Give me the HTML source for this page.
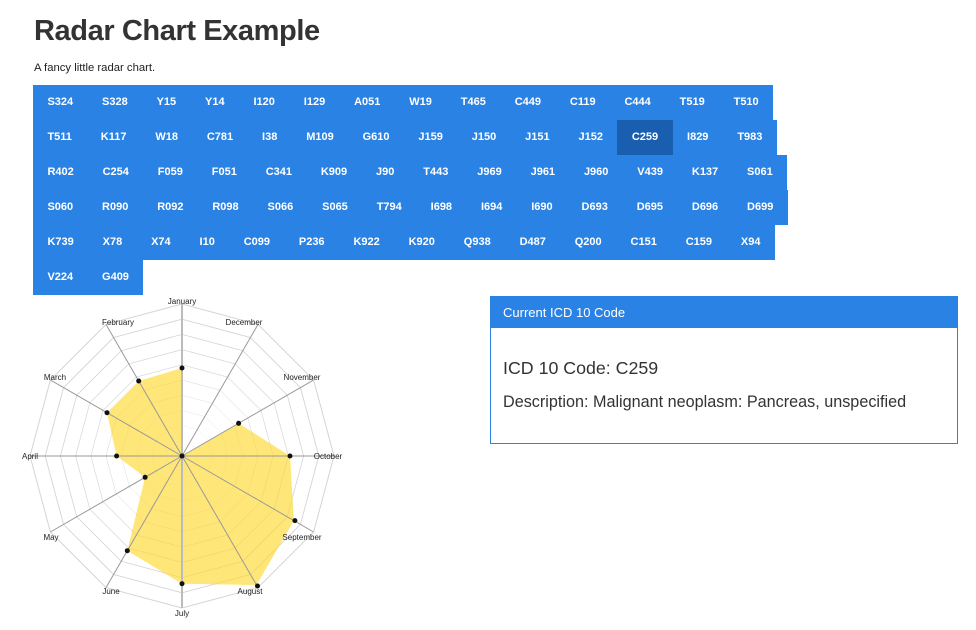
<!DOCTYPE html>
<html><head><meta charset="utf-8"><style>
body{margin:0;background:#fff;font-family:"Liberation Sans",sans-serif;color:#333;width:976px;height:630px;overflow:hidden;position:relative}
h1{position:absolute;left:34px;top:15px;margin:0;font-size:29px;font-weight:bold;color:#333;letter-spacing:-0.4px}
.sub{position:absolute;left:34px;top:62px;font-size:11.3px;color:#222}
.btns{position:absolute;left:33px;top:85px}
.row{display:flex;height:35px}
.row span{background:#2a82e4;color:#fff;font-weight:bold;font-size:11px;line-height:35px;padding:0 14.45px;white-space:nowrap}
.row span.sel{background:#1a5eb0}
.panel{position:absolute;left:490px;top:296px;width:468px;height:148px;border:1px solid #2a82e4;box-sizing:border-box}
.ph{background:#2a82e4;color:#fff;font-size:13px;height:31px;line-height:31px;padding-left:12px}
.code{position:absolute;left:12px;top:61px;font-size:17.8px;color:#333}
.desc{position:absolute;left:12px;top:96px;font-size:16.2px;color:#333}
svg{position:absolute;left:0;top:0}
</style></head><body>
<h1>Radar Chart Example</h1>
<div class="sub">A fancy little radar chart.</div>
<div class="btns">
<div class="row"><span>S324</span><span>S328</span><span>Y15</span><span>Y14</span><span>I120</span><span>I129</span><span>A051</span><span>W19</span><span>T465</span><span>C449</span><span>C119</span><span>C444</span><span>T519</span><span>T510</span></div>
<div class="row"><span>T511</span><span>K117</span><span>W18</span><span>C781</span><span>I38</span><span>M109</span><span>G610</span><span>J159</span><span>J150</span><span>J151</span><span>J152</span><span class="sel">C259</span><span>I829</span><span>T983</span></div>
<div class="row"><span>R402</span><span>C254</span><span>F059</span><span>F051</span><span>C341</span><span>K909</span><span>J90</span><span>T443</span><span>J969</span><span>J961</span><span>J960</span><span>V439</span><span>K137</span><span>S061</span></div>
<div class="row"><span>S060</span><span>R090</span><span>R092</span><span>R098</span><span>S066</span><span>S065</span><span>T794</span><span>I698</span><span>I694</span><span>I690</span><span>D693</span><span>D695</span><span>D696</span><span>D699</span></div>
<div class="row"><span>K739</span><span>X78</span><span>X74</span><span>I10</span><span>C099</span><span>P236</span><span>K922</span><span>K920</span><span>Q938</span><span>D487</span><span>Q200</span><span>C151</span><span>C159</span><span>X94</span></div>
<div class="row"><span>V224</span><span>G409</span></div>
</div>
<svg width="976" height="630">
<g fill="none" stroke="#d4d4d4" stroke-width="1">
<polygon id="o" points="182,304 106,324.4 50.4,380 30,456 50.4,532 106,587.6 182,608 258,587.6 313.6,532 334,456 313.6,380 258,324.4"/>
<use href="#o" transform="translate(182 456) scale(0.9) translate(-182 -456)"/>
<use href="#o" transform="translate(182 456) scale(0.8) translate(-182 -456)"/>
<use href="#o" transform="translate(182 456) scale(0.7) translate(-182 -456)"/>
<use href="#o" transform="translate(182 456) scale(0.6) translate(-182 -456)"/>
<use href="#o" transform="translate(182 456) scale(0.5) translate(-182 -456)"/>
<use href="#o" transform="translate(182 456) scale(0.4) translate(-182 -456)"/>
<use href="#o" transform="translate(182 456) scale(0.3) translate(-182 -456)"/>
<use href="#o" transform="translate(182 456) scale(0.2) translate(-182 -456)"/>
<use href="#o" transform="translate(182 456) scale(0.1) translate(-182 -456)"/>
</g>
<polygon points="182,368 138.7,381 107,412.7 116.6,456 145.1,477.3 127.3,550.7 182,583.7 256.5,585 293.9,520.6 290,456 238.6,423.3 182,456" fill="#ffd92f" fill-opacity="0.65"/>
<g stroke="#999" stroke-width="1">
<line x1="182" y1="456" x2="182" y2="304" stroke="#bbb" stroke-width="2"/><line x1="182" y1="456" x2="106" y2="324.4"/><line x1="182" y1="456" x2="50.4" y2="380"/><line x1="182" y1="456" x2="30" y2="456"/><line x1="182" y1="456" x2="50.4" y2="532"/><line x1="182" y1="456" x2="106" y2="587.6"/><line x1="182" y1="456" x2="182" y2="608" stroke="#bbb" stroke-width="2"/><line x1="182" y1="456" x2="258" y2="587.6"/><line x1="182" y1="456" x2="313.6" y2="532"/><line x1="182" y1="456" x2="334" y2="456"/><line x1="182" y1="456" x2="313.6" y2="380"/><line x1="182" y1="456" x2="258" y2="324.4"/>
</g>
<g fill="#111">
<circle cx="182" cy="368" r="2.5"/><circle cx="138.7" cy="381" r="2.5"/><circle cx="107" cy="412.7" r="2.5"/><circle cx="116.6" cy="456" r="2.5"/><circle cx="145.1" cy="477.3" r="2.5"/><circle cx="127.3" cy="550.7" r="2.5"/><circle cx="182" cy="583.7" r="2.5"/><circle cx="257.5" cy="586" r="2.5"/><circle cx="294.9" cy="520.6" r="2.5"/><circle cx="290" cy="456" r="2.5"/><circle cx="238.6" cy="423.3" r="2.5"/><circle cx="182" cy="456" r="2.5"/>
</g>
<g font-family="Liberation Sans,sans-serif" font-size="8" fill="#222" text-anchor="middle">
<text x="182" y="304">January</text><text x="118" y="325">February</text><text x="55" y="380">March</text><text x="30" y="459">April</text><text x="51" y="540">May</text><text x="111" y="594">June</text><text x="182" y="616">July</text><text x="250" y="594">August</text><text x="302" y="540">September</text><text x="328" y="459">October</text><text x="302" y="380">November</text><text x="244" y="325">December</text>
</g>
</svg>
<div class="panel"><div class="ph">Current ICD 10 Code</div>
<div class="code">ICD 10 Code: C259</div>
<div class="desc">Description: Malignant neoplasm: Pancreas, unspecified</div></div>
</body></html>
